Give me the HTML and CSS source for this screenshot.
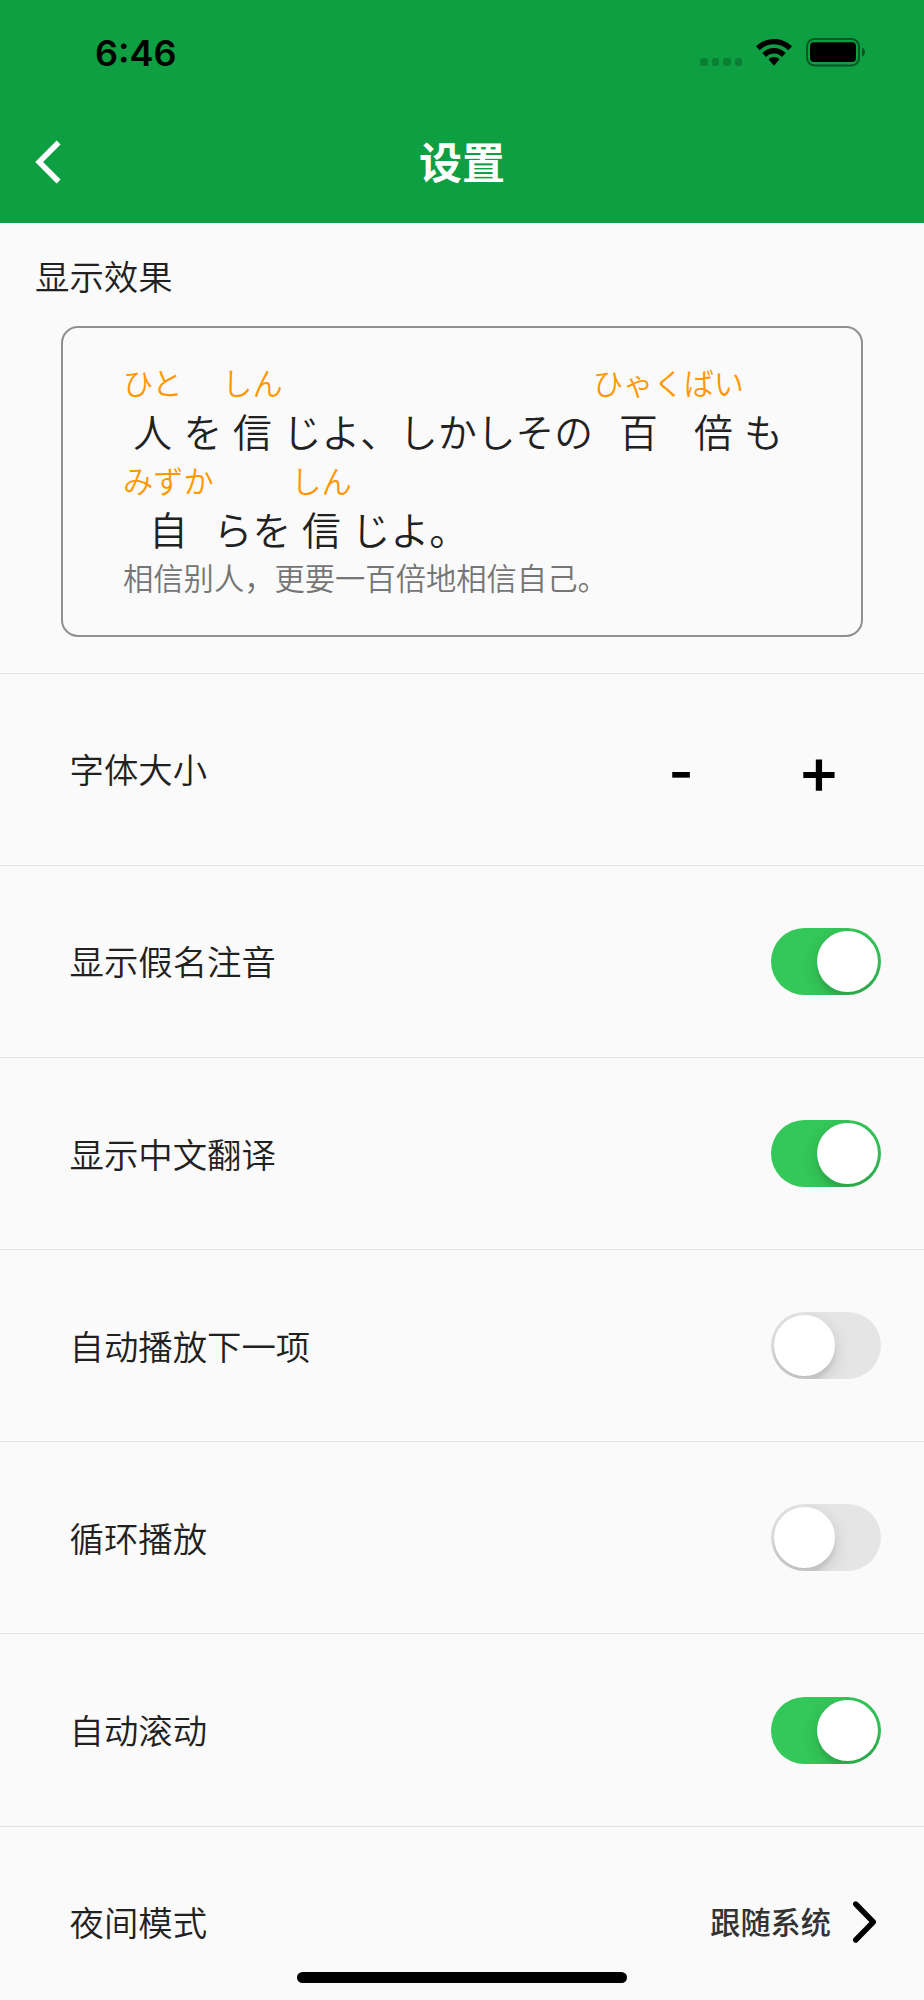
FILE: index.html
```html
<!DOCTYPE html>
<html lang="zh-CN">
<head>
  <meta charset="UTF-8" />
  <meta name="viewport" content="width=device-width, initial-scale=1.0"/>
  <title>设置</title>
  <link rel="stylesheet" href="styles.css">
</head>
<body>

  <!-- Header -->
  <header class="header">
    <div class="status-bar">
      <span class="time">6:46</span>
      <div class="status-icons">
        <div class="dots"><i></i><i></i><i></i><i></i></div>
        <svg class="wifi" width="36" height="27" viewBox="0 0 36 27">
          <path d="M18 0C11 0 4.700 2.700 0 7.300L3.700 11.200C7.500 7.600 12.400 5.300 18 5.300S28.500 7.600 32.300 11.200L36 7.300C31.300 2.700 25 0 18 0Z"/>
          <path d="M18 9C13.500 9 9.400 10.900 6.300 14L10.100 17.900C12.200 15.800 15 14.600 18 14.600S23.800 15.800 25.900 17.900L29.700 14C26.600 10.900 22.500 9 18 9Z"/>
          <path d="M18 18C15.900 18 14 18.800 12.500 20.200L18 26.700L23.500 20.200C22 18.800 20.100 18 18 18Z"/>
        </svg>
        <svg class="battery" width="60" height="29" viewBox="0 0 60 29">
          <rect x="1" y="1" width="52" height="26.400" rx="7.500" fill="none" stroke="#000" stroke-opacity=".45" stroke-width="2"/>
          <rect x="4" y="4.200" width="46" height="19.800" rx="4"/>
          <path d="M56 9.700C58 10.500 59 12.200 59 14.200S58 17.900 56 18.700Z" fill-opacity=".45"/>
        </svg>
      </div>
    </div>
    <div class="nav-bar">
      <a class="back" href="#">
        <svg width="26" height="44" viewBox="0 0 26 44">
          <path d="M23.600 2.500L4.100 22L23.600 41.500" fill="none" stroke="#fff" stroke-width="5.500"/>
        </svg>
      </a>
      <h1>设置</h1>
    </div>
  </header>

  <!-- Preview -->
  <section class="preview">
    <h2>显示效果</h2>
    <div class="card">
      <div class="sentence" lang="ja">
        <span class="word first"><span class="kana">ひと</span><span>人</span></span><span>を</span><span class="word"><span class="kana">しん</span><span>信</span></span><span>じよ、しかしその</span><span class="word"><span class="kana">ひゃくばい</span><span class="spread"><span>百</span><span>倍</span></span></span><span>も</span>
      </div>
      <div class="sentence" lang="ja">
        <span class="word"><span class="kana">みずか</span><span>自</span></span><span>らを</span><span class="word"><span class="kana">しん</span><span>信</span></span><span>じよ。</span>
      </div>
      <p class="translation">相信别人，更要一百倍地相信自己。</p>
    </div>
  </section>

  <!-- Settings -->
  <div class="list">
    <div class="row">
      <span class="label">字体大小</span>
      <div class="stepper">
        <button type="button">-</button>
        <button type="button" class="plus">+</button>
      </div>
    </div>
    <div class="row">
      <span class="label">显示假名注音</span>
      <div class="toggle on"></div>
    </div>
    <div class="row">
      <span class="label">显示中文翻译</span>
      <div class="toggle on"></div>
    </div>
    <div class="row">
      <span class="label">自动播放下一项</span>
      <div class="toggle"></div>
    </div>
    <div class="row">
      <span class="label">循环播放</span>
      <div class="toggle"></div>
    </div>
    <div class="row">
      <span class="label">自动滚动</span>
      <div class="toggle on"></div>
    </div>
    <div class="row">
      <span class="label">夜间模式</span>
      <div class="value">
        <span>跟随系统</span>
        <svg width="24" height="42" viewBox="0 0 24 42">
          <path d="M2.700 3L20.300 21L2.700 39" fill="none" stroke="#000" stroke-width="5.400" stroke-linecap="round" stroke-linejoin="round"/>
        </svg>
      </div>
    </div>
  </div>

  <div class="home-bar"></div>

</body>
</html>
```

FILE: styles.css
```css
* {
  box-sizing: border-box;
}
body {
  font-family: "Noto Sans CJK SC", sans-serif;
  font-size: 34.4px;
  font-weight: 350;
  line-height: 1.45;
  color: #212121;
  background-color: #fafafa;
  margin: 0;
  height: 2000px;
  overflow: hidden;
}
.header {
  height: 222.5px;
  background-color: #0d9f42;
}
.status-bar {
  display: flex;
  justify-content: space-between;
  height: 106px;
  padding: 0 58px 0 95px;
}
.time {
  font-family: Inter, sans-serif;
  font-size: 36px;
  font-weight: 600;
  line-height: 106px;
  color: #000;
}
.status-icons {
  display: flex;
  align-items: flex-start;
  padding-top: 38px;
}
.dots {
  display: flex;
  gap: 4px;
  margin: 20px 14px 0 0;
}
.dots i {
  width: 7.5px;
  height: 8px;
  border-radius: 2.5px;
  background-color: rgba(0,0,0,0.2);
}
.wifi {
  margin: 1px 14px 0 0;
}
.nav-bar {
  display: grid;
  grid-template-columns: 100px 1fr 100px;
  align-items: center;
  height: 111px;
}
.back {
  display: flex;
  padding-left: 35px;
}
h1 {
  margin: 0 0 3px;
  font-size: 43px;
  font-weight: 700;
  text-align: center;
  color: #fff;
}
.preview {
  height: 450px;
  padding-top: 27px;
}
h2 {
  margin: 0 0 26.5px 35px;
  font-size: 34.4px;
  font-weight: 350;
  line-height: 50px;
}
.card {
  height: 311px;
  margin: 0 61px;
  padding: 30px 60px 0;
  border: 2px solid #8f8f8f;
  border-radius: 17px;
}
.sentence {
  display: flex;
  align-items: flex-end;
  height: 97.3px;
  font-family: "Noto Sans CJK JP", sans-serif;
  font-size: 38.8px;
  line-height: 50px;
  white-space: nowrap;
}
.word {
  display: flex;
  flex-direction: column;
  align-items: center;
}
.word.first {
  margin-right: 1px;
}
.kana {
  font-size: 30.2px;
  line-height: 45px;
  color: #ff9800;
}
.spread {
  display: flex;
  gap: 36px;
  margin-left: 26px;
  align-self: flex-start;
}
.translation {
  margin: 1px 0 0;
  font-size: 30.3px;
  line-height: 47px;
  color: #757575;
}
.row {
  display: flex;
  align-items: center;
  justify-content: space-between;
  height: 192.2px;
  padding: 0 43px 0 69.5px;
  border-top: 1px solid #e5e5e5;
}
.stepper {
  display: flex;
  align-items: center;
  margin-right: -7px;
}
.stepper button {
  width: 138px;
  padding: 6px 0 0;
  border: none;
  background: none;
  font-family: Inter, sans-serif;
  font-size: 54px;
  font-weight: 600;
  line-height: 70px;
  color: #000;
}
.stepper .plus {
  padding-top: 4px;
  font-size: 65px;
  font-weight: 500;
}
.toggle {
  display: flex;
  align-items: center;
  width: 110.5px;
  height: 67px;
  padding: 3px;
  border-radius: 34px;
  background-color: #e5e5e5;
  overflow: hidden;
}
.toggle::before {
  content: "";
  width: 61px;
  height: 61px;
  border-radius: 50%;
  background-color: #fff;
  box-shadow: 0 6px 17px rgba(0,0,0,0.15), 0 6px 3px rgba(0,0,0,0.06);
}
.toggle.on {
  justify-content: flex-end;
  background-color: #34c759;
}
.value {
  display: flex;
  align-items: center;
  gap: 22px;
  font-size: 30.2px;
  font-weight: 500;
  color: #333;
  margin-right: 4px;
}
/* iOS home indicator */
.home-bar {
  position: fixed;
  left: 297px;
  bottom: 17.5px;
  width: 330px;
  height: 11px;
  border-radius: 6px;
  background-color: #000;
}
```
